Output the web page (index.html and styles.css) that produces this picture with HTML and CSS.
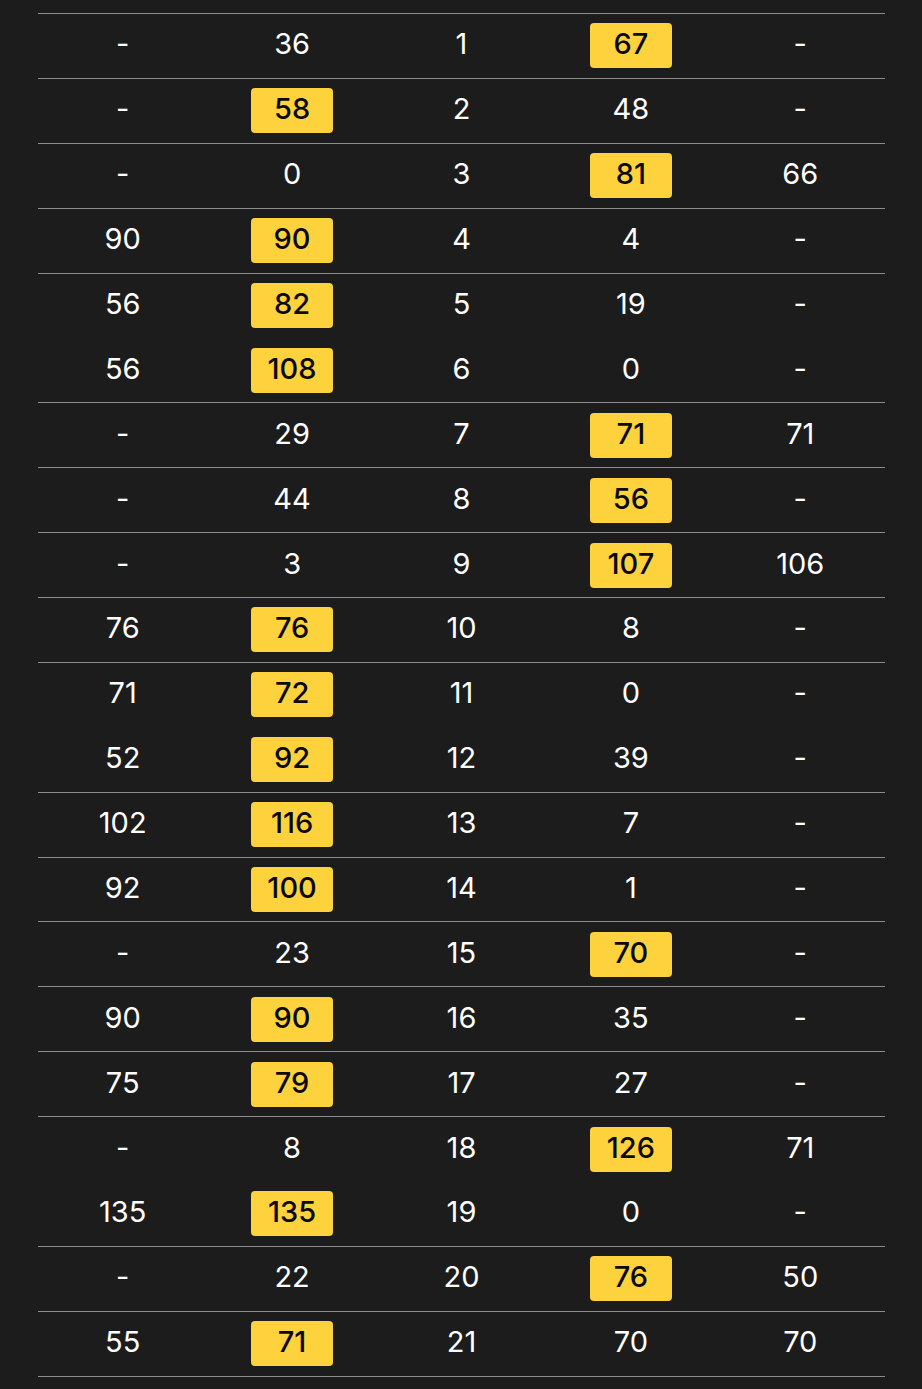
FILE: index.html
```html
<!DOCTYPE html>
<html>
<head>
<meta charset="utf-8">
<link rel="stylesheet" href="styles.css">
</head>
<body>
<div class="table">
  <div class="row"><span class="cell">-</span><span class="cell">36</span><span class="cell">1</span><span class="cell"><b class="badge">67</b></span><span class="cell">-</span></div>
  <div class="row"><span class="cell">-</span><span class="cell"><b class="badge">58</b></span><span class="cell">2</span><span class="cell">48</span><span class="cell">-</span></div>
  <div class="row"><span class="cell">-</span><span class="cell">0</span><span class="cell">3</span><span class="cell"><b class="badge">81</b></span><span class="cell">66</span></div>
  <div class="row"><span class="cell">90</span><span class="cell"><b class="badge">90</b></span><span class="cell">4</span><span class="cell">4</span><span class="cell">-</span></div>
  <div class="row noline"><span class="cell">56</span><span class="cell"><b class="badge">82</b></span><span class="cell">5</span><span class="cell">19</span><span class="cell">-</span></div>
  <div class="row"><span class="cell">56</span><span class="cell"><b class="badge">108</b></span><span class="cell">6</span><span class="cell">0</span><span class="cell">-</span></div>
  <div class="row"><span class="cell">-</span><span class="cell">29</span><span class="cell">7</span><span class="cell"><b class="badge">71</b></span><span class="cell">71</span></div>
  <div class="row"><span class="cell">-</span><span class="cell">44</span><span class="cell">8</span><span class="cell"><b class="badge">56</b></span><span class="cell">-</span></div>
  <div class="row"><span class="cell">-</span><span class="cell">3</span><span class="cell">9</span><span class="cell"><b class="badge">107</b></span><span class="cell">106</span></div>
  <div class="row"><span class="cell">76</span><span class="cell"><b class="badge">76</b></span><span class="cell">10</span><span class="cell">8</span><span class="cell">-</span></div>
  <div class="row noline"><span class="cell">71</span><span class="cell"><b class="badge">72</b></span><span class="cell">11</span><span class="cell">0</span><span class="cell">-</span></div>
  <div class="row"><span class="cell">52</span><span class="cell"><b class="badge">92</b></span><span class="cell">12</span><span class="cell">39</span><span class="cell">-</span></div>
  <div class="row"><span class="cell">102</span><span class="cell"><b class="badge">116</b></span><span class="cell">13</span><span class="cell">7</span><span class="cell">-</span></div>
  <div class="row"><span class="cell">92</span><span class="cell"><b class="badge">100</b></span><span class="cell">14</span><span class="cell">1</span><span class="cell">-</span></div>
  <div class="row"><span class="cell">-</span><span class="cell">23</span><span class="cell">15</span><span class="cell"><b class="badge">70</b></span><span class="cell">-</span></div>
  <div class="row"><span class="cell">90</span><span class="cell"><b class="badge">90</b></span><span class="cell">16</span><span class="cell">35</span><span class="cell">-</span></div>
  <div class="row"><span class="cell">75</span><span class="cell"><b class="badge">79</b></span><span class="cell">17</span><span class="cell">27</span><span class="cell">-</span></div>
  <div class="row noline"><span class="cell">-</span><span class="cell">8</span><span class="cell">18</span><span class="cell"><b class="badge">126</b></span><span class="cell">71</span></div>
  <div class="row"><span class="cell">135</span><span class="cell"><b class="badge">135</b></span><span class="cell">19</span><span class="cell">0</span><span class="cell">-</span></div>
  <div class="row"><span class="cell">-</span><span class="cell">22</span><span class="cell">20</span><span class="cell"><b class="badge">76</b></span><span class="cell">50</span></div>
  <div class="row"><span class="cell">55</span><span class="cell"><b class="badge">71</b></span><span class="cell">21</span><span class="cell">70</span><span class="cell">70</span></div>
</div>
</body>
</html>
```
FILE: styles.css
```css
html, body {
  margin: 0;
  padding: 0;
  background: #1c1c1c;
}
body {
  font-family: "Inter", "Roboto", sans-serif;
  color: #ffffff;
  height: 1389px;
  overflow: hidden;
}
.table {
  margin: 13px 37px 0 38px;
  border-top: 1px solid #8c8c8c;
}
.row {
  display: grid;
  grid-template-columns: repeat(5, 1fr);
  height: 63.9px;
  border-bottom: 1px solid #8c8c8c;
  align-items: center;
}
.row.noline {
  border-bottom-color: transparent;
}
.cell {
  display: flex;
  justify-content: center;
  align-items: center;
  font-size: 29px;
  font-weight: 400;
  line-height: 1;
  padding-bottom: 4px;
}
.badge {
  box-sizing: border-box;
  display: flex;
  justify-content: center;
  align-items: center;
  width: 82px;
  height: 45px;
  margin-bottom: -4px;
  padding-bottom: 4px;
  background: #fdd23d;
  color: #0a0a0a;
  border-radius: 4px;
  font-weight: 500;
}
```
